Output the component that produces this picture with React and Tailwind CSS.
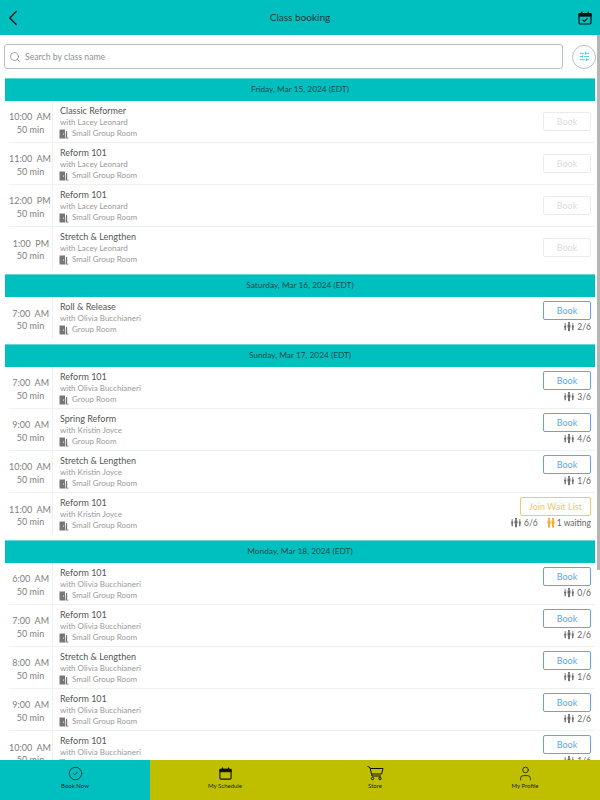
import { ChevronLeft, Search, SlidersHorizontal, CircleCheck, User } from 'lucide-react';

function DoorIcon() {
  return (
    <svg width="10" height="10" viewBox="0 0 10 10" className="shrink-0">
      <path d="M0.5 0.5h5.5v9h-5.5z" fill="#777" />
      <path d="M7 2h1.2v6.8h1.3v0.7h-3z" fill="#777" />
      <rect x="4" y="4.6" width="1" height="1" fill="#fff" />
    </svg>
  );
}

function PeopleIcon({ color = '#666', small = false }) {
  const figure = (x, y, s) => (
    <g fill={color}>
      <circle cx={x} cy={y + 1} r={s * 0.75} />
      <rect x={x - s} y={y + 2.2} width={s * 2} height={s * 2.6} rx="0.5" />
      <rect x={x - s * 0.65} y={y + 2.2 + s * 2.4} width={s * 1.3} height={s * 2.6} />
    </g>
  );
  if (small) {
    return (
      <svg width="8" height="11" viewBox="0 0 8 11" className="shrink-0">
        {figure(2, 0, 1.5)}
        {figure(6, 0, 1.5)}
      </svg>
    );
  }
  return (
    <svg width="10" height="11" viewBox="0 0 10 11" className="shrink-0">
      {figure(1.2, 1, 1)}
      {figure(5, 0, 1.4)}
      {figure(8.8, 1, 1)}
    </svg>
  );
}

function CalendarIcon({ size = 14, check = false }) {
  return (
    <svg width={size} height={size} viewBox="0 0 14 14" fill="none" stroke="#111" className="shrink-0">
      <rect x="1" y="2.5" width="12" height="10.5" rx="1.2" strokeWidth="1.2" />
      <rect x="1" y="2.5" width="12" height="2.6" fill="#111" strokeWidth="1" />
      <path d="M3.8 0.5v2.4M10.2 0.5v2.4" strokeWidth="1.4" />
      {check && <path d="M4.6 8.8l1.7 1.6 3.2-3" strokeWidth="1.1" />}
    </svg>
  );
}

function CartIcon() {
  return (
    <svg width="17" height="15" viewBox="0 0 17 15" fill="none" stroke="#111" strokeWidth="1" className="shrink-0">
      <path d="M0.5 0.5l2.5 1 2 8.5h9" />
      <path d="M3.3 2.5h12.7l-1.4 5.5h-10" />
      <circle cx="5.5" cy="12.5" r="1.2" />
      <circle cx="13" cy="12.5" r="1.2" />
    </svg>
  );
}

function ClassRow({ time, name, teacher, room, state = 'open', count, waiting, last }) {
  return (
    <div className={`flex h-[42px] ml-[9px] mr-[5px] ${last ? '' : 'border-b border-[#eef1f2]'}`}>
      <div className="w-[44px] shrink-0 border-r border-[#eef1f2] pr-[3px] pt-[4px] flex flex-col justify-center text-[9px] leading-[12.5px] text-[#808080]">
        <div className="whitespace-pre text-right">{time}</div>
        <div className="text-center pl-[3px]">50 min</div>
      </div>
      <div className="pl-[7px] flex-1 min-w-0 pt-[4px]">
        <div className="text-[9px] leading-[11px] text-[#555]">{name}</div>
        <div className="text-[8px] leading-[11px] mt-[1px] text-[#999]">with {teacher}</div>
        <div className="flex items-center gap-[3px] -ml-[1px] text-[8px] leading-[11px] text-[#999]">
          <DoorIcon />
          <span>{room}</span>
        </div>
      </div>
      <div className="flex flex-col items-end pr-[4px] shrink-0">
        {state === 'disabled' && (
          <div className="w-[48px] h-[19px] mt-[11px] border border-[#ebebeb] rounded-[2px] text-[9px] text-[#dcdcdc] flex items-center justify-center">Book</div>
        )}
        {state === 'open' && (
          <div className="w-[48px] h-[19px] mt-[4px] border border-[#5aa7ee] rounded-[2px] text-[9px] text-[#5aa7ee] flex items-center justify-center">Book</div>
        )}
        {state === 'wait' && (
          <div className="w-[71px] h-[19px] mt-[4px] border border-[#fbc56b] rounded-[2px] text-[9px] text-[#fbc56b] flex items-center justify-center">Join Wait List</div>
        )}
        {count && (
          <div className="flex items-center gap-[9px] mt-[2px] text-[8.5px] leading-[11px] text-[#666]">
            <span className="flex items-center gap-[3px]"><PeopleIcon /><span>{count}</span></span>
            {waiting && (
              <span className="flex items-center gap-[2px]"><PeopleIcon color="#f4ad3d" small /><span>{waiting}</span></span>
            )}
          </div>
        )}
      </div>
    </div>
  );
}

function DateBar({ children }) {
  return (
    <div className="mx-[5px] h-[23px] pb-[1px] bg-[#00bfbf] border-t border-[#66d6d4] flex items-center justify-center text-[8.3px] text-[#174a4a]">
      {children}
    </div>
  );
}

const days = [
  {
    date: 'Friday, Mar 15, 2024 (EDT)',
    rows: [
      { time: '10:00  AM', name: 'Classic Reformer', teacher: 'Lacey Leonard', room: 'Small Group Room', state: 'disabled' },
      { time: '11:00  AM', name: 'Reform 101', teacher: 'Lacey Leonard', room: 'Small Group Room', state: 'disabled' },
      { time: '12:00  PM', name: 'Reform 101', teacher: 'Lacey Leonard', room: 'Small Group Room', state: 'disabled' },
      { time: '1:00  PM', name: 'Stretch & Lengthen', teacher: 'Lacey Leonard', room: 'Small Group Room', state: 'disabled' },
    ],
  },
  {
    date: 'Saturday, Mar 16, 2024 (EDT)',
    rows: [
      { time: '7:00  AM', name: 'Roll & Release', teacher: 'Olivia Bucchianeri', room: 'Group Room', count: '2/6' },
    ],
  },
  {
    date: 'Sunday, Mar 17, 2024 (EDT)',
    rows: [
      { time: '7:00  AM', name: 'Reform 101', teacher: 'Olivia Bucchianeri', room: 'Group Room', count: '3/6' },
      { time: '9:00  AM', name: 'Spring Reform', teacher: 'Kristin Joyce', room: 'Group Room', count: '4/6' },
      { time: '10:00  AM', name: 'Stretch & Lengthen', teacher: 'Kristin Joyce', room: 'Small Group Room', count: '1/6' },
      { time: '11:00  AM', name: 'Reform 101', teacher: 'Kristin Joyce', room: 'Small Group Room', state: 'wait', count: '6/6', waiting: '1 waiting' },
    ],
  },
  {
    date: 'Monday, Mar 18, 2024 (EDT)',
    rows: [
      { time: '6:00  AM', name: 'Reform 101', teacher: 'Olivia Bucchianeri', room: 'Small Group Room', count: '0/6' },
      { time: '7:00  AM', name: 'Reform 101', teacher: 'Olivia Bucchianeri', room: 'Small Group Room', count: '2/6' },
      { time: '8:00  AM', name: 'Stretch & Lengthen', teacher: 'Olivia Bucchianeri', room: 'Small Group Room', count: '1/6' },
      { time: '9:00  AM', name: 'Reform 101', teacher: 'Olivia Bucchianeri', room: 'Small Group Room', count: '2/6' },
      { time: '10:00  AM', name: 'Reform 101', teacher: 'Olivia Bucchianeri', room: 'Small Group Room', count: '1/6' },
    ],
  },
];

function NavItem({ icon, label, active }) {
  return (
    <div className={`flex-1 flex flex-col items-center pt-[5px] ${active ? 'bg-[#00bfbf]' : ''}`}>
      <div className="h-[16px] flex items-center">{icon}</div>
      <div className="text-[6px] leading-[8px] mt-[1px] text-[#222]">{label}</div>
    </div>
  );
}

export default function App() {
  return (
    <div className="relative w-[600px] h-[800px] overflow-hidden flex flex-col bg-white font-['Lato','Noto_Sans',sans-serif]">
      <header className="h-[35px] shrink-0 bg-[#00bfbf] flex items-center justify-between pr-[8px] text-[#14393a]">
        <ChevronLeft size={26} strokeWidth={1.2} className="text-[#111]" />
        <span className="text-[10px] pr-[4px]">Class booking</span>
        <CalendarIcon size={14} check />
      </header>

      <div className="flex-1 min-h-0 overflow-hidden">
        <div className="flex items-center pl-[4px] pr-[4px] pt-[9px] pb-[9px] gap-[9px]">
          <div className="flex-1 h-[25px] border border-[#b9c0c4] rounded-[3px] flex items-center pl-[4px] gap-[4px] text-[8.7px] text-[#8b9296]">
            <Search size={12} strokeWidth={1.25} className="text-[#6c7478]" />
            <span>Search by class name</span>
          </div>
          <div className="w-[24px] h-[24px] rounded-full border border-[#b9c0c4] flex items-center justify-center">
            <SlidersHorizontal size={11} strokeWidth={1.5} className="text-[#00bfbf]" />
          </div>
        </div>

        <div className="flex flex-col gap-[5px]">
          {days.map((day) => (
            <section key={day.date}>
              <DateBar>{day.date}</DateBar>
              {day.rows.map((row, i) => (
                <ClassRow key={i} {...row} last={i === day.rows.length - 1} />
              ))}
            </section>
          ))}
        </div>
      </div>

      <nav className="h-[40px] shrink-0 bg-[#bfbf00] flex">
        <NavItem active label="Book Now" icon={<CircleCheck size={15} strokeWidth={1.1} className="text-[#111]" />} />
        <NavItem label="My Schedule" icon={<CalendarIcon size={13} />} />
        <NavItem label="Store" icon={<CartIcon />} />
        <NavItem label="My Profile" icon={<User size={17} strokeWidth={1.1} className="text-[#111]" />} />
      </nav>

      <div className="absolute right-0 top-[35px] w-[3px] h-[535px] bg-[#b5b5b5]" />
    </div>
  );
}
